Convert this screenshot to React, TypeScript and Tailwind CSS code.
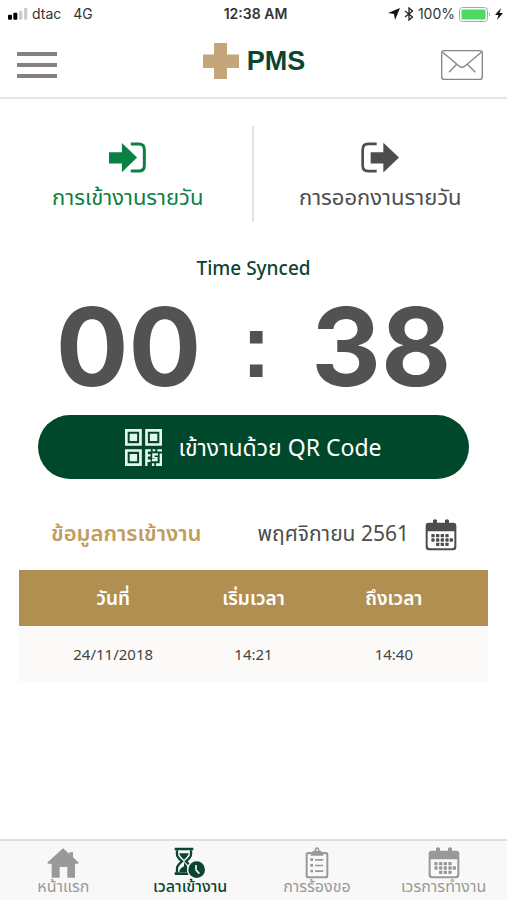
import type { ReactNode } from "react";

const FONT = "font-['Noto_Sans_Thai','Noto_Sans','Open_Sans',sans-serif]";

const ENTRIES = [{ date: "24/11/2018", start: "14:21", end: "14:40" }];

const NAV_ITEMS = [
  { label: "หน้าแรก", icon: <HomeIcon />, active: false },
  { label: "เวลาเข้างาน", icon: <HourglassIcon />, active: true },
  { label: "การร้องขอ", icon: <ClipboardIcon />, active: false },
  { label: "เวรการทำงาน", icon: <CalendarIcon className="w-8 h-8" />, active: false },
];

export default function App() {
  return (
    <div className={`min-h-screen flex flex-col bg-white text-[#4d4d4d] ${FONT}`}>
      <StatusBar />

      {/* App header */}
      <header className="h-[71px] flex items-center justify-between pl-[17px] pr-4 pt-1 border-b-2 border-[#e6e6e6]">
        <button aria-label="Menu" className="w-[58px] h-10 flex items-center">
          <svg viewBox="0 0 40 28" className="w-10 h-7" fill="#858180">
            <rect y="1" width="40" height="4" />
            <rect y="12" width="40" height="4" />
            <rect y="23" width="40" height="4" />
          </svg>
        </button>
        <div className="flex items-center gap-2 pb-2">
          <svg viewBox="0 0 36 36" className="w-9 h-9" fill="#c5a67a">
            <path d="M11 0H24V11.500H36V25H24V36H11V25H0V11.500H11Z" />
          </svg>
          <h1 className="font-['Liberation_Sans',sans-serif] font-bold text-[27px] leading-8 text-[#0b4530]">
            PMS
          </h1>
        </div>
        <button aria-label="Messages" className="w-[58px] h-10 flex items-center justify-center">
          <svg viewBox="0 0 126 90" className="w-[42px] h-[30px]" fill="none" stroke="#858585" strokeWidth="4">
            <rect x="2" y="2" width="122" height="86" rx="8" />
            <path d="M5 7 54 48Q63 56 72 48L121 7M47 43 24 67M79 43 103 67" />
          </svg>
        </button>
      </header>

      <main className="flex flex-col">
        {/* Check-in / check-out tabs */}
        <div className="mt-[27px] h-24 grid grid-cols-2">
          <button className="flex flex-col items-center gap-2.5 pt-4 pl-1 text-[#0b8043] border-r-2 border-[#e3e3e3]">
            <SignInIcon />
            <span className="text-[22px] leading-8">การเข้างานรายวัน</span>
          </button>
          <button className="flex flex-col items-center gap-2.5 pt-4">
            <SignOutIcon />
            <span className="text-[22px] leading-8">การออกงานรายวัน</span>
          </button>
        </div>

        {/* Clock */}
        <p className="mt-9 text-center text-[19px] leading-6 font-medium text-[#0b4530]">
          Time Synced
        </p>
        <div className="flex items-center justify-center gap-10 font-['Inter',sans-serif] font-bold text-[108px] leading-[129px] text-[#525252]">
          <span>00</span>
          <span className="font-['Liberation_Sans',sans-serif] text-[90px]">:</span>
          <span>38</span>
        </div>

        <button className="mx-[38px] mt-1 h-16 rounded-full bg-[#00482b] text-white flex items-center justify-center gap-4">
          <QrIcon />
          <span className="pt-1 text-[23px] leading-8">เข้างานด้วย QR Code</span>
        </button>

        {/* Attendance table */}
        <div className="mt-9 pl-[51px] pr-[50px] flex items-center justify-between">
          <h2 className="text-[22px] leading-10 font-semibold text-[#bf9d60]">ข้อมูลการเข้างาน</h2>
          <button className="flex items-center gap-4">
            <span className="text-[21px] leading-10">พฤศจิกายน 2561</span>
            <CalendarIcon className="w-8 h-8" />
          </button>
        </div>
        <div className="mx-[19px] mt-[15px]">
          <table className="w-full table-fixed text-center">
            <thead className="bg-[#b18f51] text-white">
              <tr className="h-14 text-[19px]">
                <th className="pt-1 pl-8 font-semibold">วันที่</th>
                <th className="pt-1 font-semibold">เริ่มเวลา</th>
                <th className="pt-1 pr-8 font-semibold">ถึงเวลา</th>
              </tr>
            </thead>
            <tbody className="bg-[#fbfaf9]">
              {ENTRIES.map((entry) => (
                <tr key={entry.date} className="h-14 text-[15px] text-[#444]">
                  <td className="pt-1 pl-8">{entry.date}</td>
                  <td className="pt-1">{entry.start}</td>
                  <td className="pt-1 pr-8">{entry.end}</td>
                </tr>
              ))}
            </tbody>
          </table>
        </div>
      </main>

      {/* Bottom navigation */}
      <nav className="mt-auto h-[61px] grid grid-cols-4 bg-[#f8f8f8] border-t-2 border-[#dedede]">
        {NAV_ITEMS.map((item) => (
          <NavItem key={item.label} {...item} />
        ))}
      </nav>
    </div>
  );
}

function StatusBar() {
  return (
    <div className="h-7 grid grid-cols-[1fr_auto_1fr] items-center pl-2 pr-1 font-['Inter',sans-serif] text-sm text-[#333]">
      <div className="flex items-center gap-1">
        <svg viewBox="0 0 60 36" className="w-5 h-3">
          <rect y="20" width="12" height="15" rx="3" fill="#000" />
          <rect x="16" y="14" width="12" height="21" rx="3" fill="#000" />
          <rect x="33" y="8" width="10" height="27" rx="3" fill="#ccc" />
          <rect x="48" y="0" width="10" height="35" rx="3" fill="#ccc" />
        </svg>
        <span>dtac</span>
        <span className="ml-2">4G</span>
      </div>
      <span className="text-center font-semibold">12:38 AM</span>
      <div className="flex items-center justify-end gap-1">
        <svg viewBox="0 0 12 12" className="w-3 h-3" fill="#111">
          <path d="M12 0 7 12 6 6 0 5Z" />
        </svg>
        <svg viewBox="0 0 10 14" className="w-[10px] h-[14px]" fill="none" stroke="#222" strokeWidth="1.300">
          <path d="M1 4 8.500 10 5 13V1L8.500 4 1 10" />
        </svg>
        <span>100%</span>
        <svg viewBox="0 0 32 15" className="w-8 h-[15px]">
          <rect x="0.500" y="0.500" width="28" height="14" rx="3" fill="#fff" stroke="#aaa" />
          <rect x="2.500" y="2.500" width="24" height="10" rx="1" fill="#4cd964" />
          <path d="M30 5Q32 7.500 30 10Z" fill="#aaa" />
        </svg>
        <svg viewBox="0 0 8 12" className="w-2 h-3" fill="#111">
          <path d="M6 0 0 7H3.500L2 12 8 5H4.500Z" />
        </svg>
      </div>
    </div>
  );
}

function NavItem({
  label,
  icon,
  active,
}: {
  label: string;
  icon: ReactNode;
  active: boolean;
}) {
  return (
    <a
      href="#"
      className={`flex flex-col items-center pt-[6px] ${
        active ? "text-[#0b4530] font-medium" : "text-[#999]"
      }`}
    >
      {icon}
      <span className="text-base leading-4 whitespace-nowrap">{label}</span>
    </a>
  );
}

function SignInIcon() {
  return (
    <svg viewBox="0 0 112 92" className="w-[37px] h-[31px]" fill="currentColor">
      <path d="M0 30H39V2L85 46 39 91V64H0Z" />
      <path
        d="M66 5H90Q107 5 107 22V70Q107 87 90 87H66"
        fill="none"
        stroke="currentColor"
        strokeWidth="9"
      />
    </svg>
  );
}

function SignOutIcon() {
  return (
    <svg viewBox="0 0 114 92" className="w-[38px] h-[31px]" fill="currentColor">
      <path d="M29 30H67V2L114 46 67 91V64H29Z" />
      <path
        d="M47 5H22Q5 5 5 22V70Q5 87 22 87H47"
        fill="none"
        stroke="currentColor"
        strokeWidth="8"
      />
    </svg>
  );
}

function QrIcon() {
  return (
    <svg viewBox="0 0 110 110" className="w-[37px] h-[37px]" fill="#eaf4ee">
      <path
        fillRule="evenodd"
        d="M0 0H50V50H0ZM8 8V42H42V8ZM60 0H110V50H60ZM68 8V42H102V8ZM0 60H50V110H0ZM8 68V102H42V68Z"
      />
      <path d="M14 14H36V36H14ZM74 14H96V36H74ZM14 74H36V96H14Z" />
      <path d="M60 60H77V67H68V75H76V82H68V91H76V98H67V110H60ZM82 60H90V66H82ZM96 60H110V67H96ZM81 72H98V79H88V83H97V96H80V89H90V88H81ZM103 73H110V110H92V102H103ZM80 102H87V110H80Z" />
    </svg>
  );
}

function CalendarIcon({ className }: { className: string }) {
  const dots = [
    [19, 45], [33, 45], [47, 45], [61, 45],
    [19, 58], [33, 58], [47, 58], [61, 58], [74, 58],
    [33, 71], [47, 71], [61, 71],
  ];

  return (
    <svg viewBox="0 0 96 96" className={className} fill="currentColor">
      <path
        fillRule="evenodd"
        d="M11 11H24V4Q30-2 36 4V11H60V4Q66-2 72 4V11H85Q94 11 94 20V84Q94 94 84 94H12Q2 94 2 84V20Q2 11 11 11ZM8 37V81Q8 88 15 88H81Q88 88 88 81V37Z"
      />
      {dots.map(([x, y]) => (
        <rect key={`${x}-${y}`} x={x} y={y} width="10" height="10" rx="2" />
      ))}
    </svg>
  );
}

function HomeIcon() {
  return (
    <svg viewBox="0 0 92 96" className="w-8 h-8" fill="currentColor">
      <path d="M46 4 65 21V16H76V31L92 46V50H82V92H59V60H36V92H12V50H0V46Z" />
    </svg>
  );
}

function HourglassIcon() {
  return (
    <svg viewBox="0 0 92 96" className="w-8 h-8" fill="currentColor">
      <path d="M0 2H56V10H0ZM0 76H42V84H0Z" />
      <path
        d="M7 10V23Q7 30 22 43Q7 56 7 63V77M49 10V23Q49 30 34 43L43 52"
        fill="none"
        stroke="currentColor"
        strokeWidth="7"
      />
      <path d="M14 19H42Q42 26 28 38Q14 26 14 19ZM28 46 38 58V75H14Q14 65 28 58Z" />
      <circle cx="66" cy="68" r="29" fill="#f8f8f8" />
      <circle cx="66" cy="68" r="25" />
      <path d="M64 54V69L74 80" fill="none" stroke="#f8f8f8" strokeWidth="5" />
    </svg>
  );
}

function ClipboardIcon() {
  return (
    <svg viewBox="0 0 70 96" className="w-6 h-8" fill="currentColor">
      <path
        fillRule="evenodd"
        d="M9 15H20Q23 11 28 11Q28 1 35 1Q42 1 42 11Q47 11 50 15H61Q69 15 69 23V86Q69 94 61 94H9Q1 94 1 86V23Q1 15 9 15ZM7 25V84Q7 88 11 88H59Q63 88 63 84V25Q63 21 59 21H54V26H16V21H11Q7 21 7 25ZM32 11H38Q38 5 35 5Q32 5 32 11Z"
      />
      <path d="M15 34H23V42H15ZM29 36H54V41H29ZM15 51H23V59H15ZM29 53H54V58H29ZM15 68H23V76H15ZM29 70H54V75H29Z" />
    </svg>
  );
}
